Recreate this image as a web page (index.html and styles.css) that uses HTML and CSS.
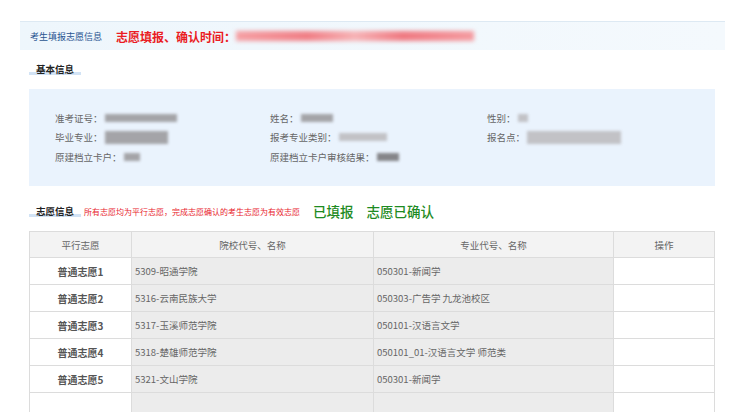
FILE: index.html
```html
<!DOCTYPE html>
<html lang="zh-CN">
<head>
    <meta charset="UTF-8">
    <meta name="viewport" content="width=device-width, initial-scale=1.0">
    <link rel="stylesheet" href="styles.css">
</head>
<body>
    <div class="top-bar">
        <span class="bar-title">考生填报志愿信息</span>
        <span class="bar-time">志愿填报、确认时间：</span>
        <span class="blur blur-red"></span>
    </div>

    <div class="sec-head">
        <span class="sec-title">基本信息</span>
    </div>

    <div class="info-box">
        <div class="info-item">准考证号：<span class="blur" style="width: 72px"></span></div>
        <div class="info-item">姓名：<span class="blur" style="width: 32px"></span></div>
        <div class="info-item">性别：<span class="blur light" style="width: 10px"></span></div>
        <div class="info-item">毕业专业：<span class="blur tall" style="width: 63px"></span></div>
        <div class="info-item">报考专业类别：<span class="blur light" style="width: 48px"></span></div>
        <div class="info-item">报名点：<span class="blur tall light" style="width: 94px"></span></div>
        <div class="info-item">原建档立卡户：<span class="blur" style="width: 16px"></span></div>
        <div class="info-item">原建档立卡户审核结果：<span class="blur dark" style="width: 22px"></span></div>
    </div>

    <div class="sec-head sec-head-2">
        <span class="sec-title">志愿信息</span>
        <span class="sec-note">所有志愿均为平行志愿，完成志愿确认的考生志愿为有效志愿</span>
        <span class="status">已填报</span>
        <span class="status">志愿已确认</span>
    </div>

    <table class="wish-table">
        <thead>
            <tr>
                <th class="c1">平行志愿</th>
                <th class="c2">院校代号、名称</th>
                <th class="c3">专业代号、名称</th>
                <th class="c4">操作</th>
            </tr>
        </thead>
        <tbody>
            <tr>
                <td class="c1">普通志愿1</td>
                <td class="c2">5309-昭通学院</td>
                <td class="c3">050301-新闻学</td>
                <td class="c4"></td>
            </tr>
            <tr>
                <td class="c1">普通志愿2</td>
                <td class="c2">5316-云南民族大学</td>
                <td class="c3">050303-广告学 九龙池校区</td>
                <td class="c4"></td>
            </tr>
            <tr>
                <td class="c1">普通志愿3</td>
                <td class="c2">5317-玉溪师范学院</td>
                <td class="c3">050101-汉语言文学</td>
                <td class="c4"></td>
            </tr>
            <tr>
                <td class="c1">普通志愿4</td>
                <td class="c2">5318-楚雄师范学院</td>
                <td class="c3">050101_01-汉语言文学 师范类</td>
                <td class="c4"></td>
            </tr>
            <tr>
                <td class="c1">普通志愿5</td>
                <td class="c2">5321-文山学院</td>
                <td class="c3">050301-新闻学</td>
                <td class="c4"></td>
            </tr>
            <tr>
                <td class="c1"></td>
                <td class="c2"></td>
                <td class="c3"></td>
                <td class="c4"></td>
            </tr>
        </tbody>
    </table>
</body>
</html>
```

FILE: styles.css
```css
body {
    margin: 0;
    background-color: #fff;
    font-family: "Noto Sans CJK SC", "Liberation Sans", sans-serif;
    color: #555;
}

.top-bar {
    margin: 21px 15px 0 20px;
    height: 28px;
    padding-left: 10px;
    display: flex;
    align-items: center;
    background: linear-gradient(to right, #eef6fc, #f4f9fd);
    border-top: 1px solid #dde9f3;
}

.bar-title {
    font-size: 9px;
    color: #2a5591;
    margin-right: 14px;
}

.bar-time {
    font-size: 12px;
    font-weight: bold;
    color: #ea1c24;
}

.blur {
    display: inline-block;
    height: 8px;
    vertical-align: middle;
    background-color: #a4a4a8;
    filter: blur(1.6px);
}

.blur.light {
    background-color: #c2c2c6;
}

.blur.dark {
    background-color: #858589;
}

.blur.tall {
    height: 13px;
}

.blur-red {
    width: 238px;
    height: 10px;
    background: linear-gradient(to right, #f5a0a4, #f07f86 30%, #f6b3b6 50%, #ef7a82 70%, #f49ca1);
    filter: blur(2px);
}

.sec-head {
    margin: 13px 25px 0 29px;
    height: 12px;
    display: flex;
    align-items: center;
}

.sec-title {
    padding: 0 7px;
    font-size: 9.5px;
    line-height: 12px;
    font-weight: bold;
    color: #222;
    box-shadow: inset 0 -3px 0 #d2e3f5;
}

.info-box {
    margin: 14px 25px 0 29px;
    height: 78px;
    padding: 19px 0 0 26px;
    display: grid;
    grid-template-columns: 215px 217px 1fr;
    grid-auto-rows: 19.5px;
    background-color: #eaf3fd;
}

.info-item {
    font-size: 9.5px;
    color: #666;
    display: flex;
    align-items: center;
}

.info-item .blur {
    margin-left: 2px;
}

.sec-head-2 {
    margin-top: 19px;
}

.sec-note {
    margin-left: 3px;
    font-size: 8px;
    color: #e8242c;
}

.status {
    margin-left: 13px;
    font-size: 13.5px;
    font-weight: 500;
    color: #1e8b23;
}

.sec-note + .status {
    margin-left: 13px;
}

.wish-table {
    margin: 14px 25px 0 29px;
    width: 686px;
    border-collapse: collapse;
    table-layout: fixed;
    font-size: 9.5px;
}

.wish-table th,
.wish-table td {
    border: 1px solid #dcdcdc;
    padding: 0 3px;
    height: 26px;
}

.wish-table th {
    height: 25px;
    background-color: #f3f3f3;
    font-weight: normal;
    color: #666;
    text-align: center;
}

.wish-table .c1 { width: 95px; }
.wish-table .c2 { width: 235px; }
.wish-table .c3 { width: 233px; }

.wish-table td.c1 {
    text-align: center;
    font-weight: bold;
    font-size: 10px;
    color: #555;
}

.wish-table td.c2,
.wish-table td.c3 {
    background-color: #ececec;
    color: #666;
}

.wish-table td.c4 {
    background-color: #fff;
}
```
